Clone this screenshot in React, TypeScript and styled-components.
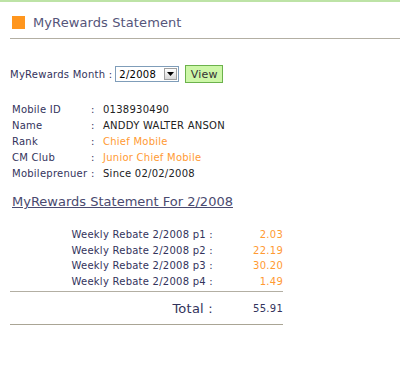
import { FC } from 'react'
import styled, { createGlobalStyle } from 'styled-components'

const GlobalStyle = createGlobalStyle`
  html, body {
    margin: 0;
    padding: 0;
    background: #ffffff;
  }
  body {
    font-family: 'DejaVu Sans', Verdana, sans-serif;
    font-size: 10px;
    letter-spacing: 0.25px;
    color: #33335c;
  }
`

const rebates = [
  { label: 'Weekly Rebate 2/2008 p1', amount: '2.03' },
  { label: 'Weekly Rebate 2/2008 p2', amount: '22.19' },
  { label: 'Weekly Rebate 2/2008 p3', amount: '30.20' },
  { label: 'Weekly Rebate 2/2008 p4', amount: '1.49' }
]

const App: FC = () => {
  return (
    <Page>
      <GlobalStyle />
      <TopBar />
      <Header>
        <Bullet />
        <Title>MyRewards Statement</Title>
      </Header>

      <Body>
        <MonthForm>
          <span>MyRewards Month :</span>
          <Select>
            <span>2/2008</span>
            <SelectArrow>
              <svg width="7" height="4" viewBox="0 0 7 4">
                <path d="M0 0h7L3.5 4z" fill="#000" />
              </svg>
            </SelectArrow>
          </Select>
          <ViewButton>View</ViewButton>
        </MonthForm>

        <InfoList>
          <InfoLabel>Mobile ID</InfoLabel>
          <Colon>:</Colon>
          <InfoValue>0138930490</InfoValue>
          <InfoLabel>Name</InfoLabel>
          <Colon>:</Colon>
          <InfoValue>ANDDY WALTER ANSON</InfoValue>
          <InfoLabel>Rank</InfoLabel>
          <Colon>:</Colon>
          <InfoValue highlight>Chief Mobile</InfoValue>
          <InfoLabel>CM Club</InfoLabel>
          <Colon>:</Colon>
          <InfoValue highlight>Junior Chief Mobile</InfoValue>
          <InfoLabel>Mobileprenuer</InfoLabel>
          <Colon>:</Colon>
          <InfoValue>Since 02/02/2008</InfoValue>
        </InfoList>

        <StatementLink>MyRewards Statement For 2/2008</StatementLink>

        <Statement>
          <RebateRows>
            {rebates.map((r) => (
              <RebateRow key={r.label}>
                <RebateLabel>{r.label} :</RebateLabel>
                <RebateAmount>{r.amount}</RebateAmount>
              </RebateRow>
            ))}
          </RebateRows>
          <TotalRow>
            <TotalLabel>Total :</TotalLabel>
            <TotalAmount>55.91</TotalAmount>
          </TotalRow>
        </Statement>
      </Body>
    </Page>
  )
}

const Page = styled.div`
  width: 400px;
  height: 386px;
  overflow: hidden;
`

const TopBar = styled.div`
  height: 2px;
  background: #bde3a6;
`

const Header = styled.div`
  display: flex;
  align-items: center;
  gap: 8px;
  margin-left: 10px;
  padding: 13px 0 8px 2px;
  border-bottom: 1px solid #b3afa3;
`

const Bullet = styled.div`
  width: 13px;
  height: 13px;
  background: #ff961e;
`

const Title = styled.div`
  font-size: 13px;
  letter-spacing: 0.1px;
  color: #55557a;
  line-height: 15px;
`

const Body = styled.div`
  padding: 26px 0 0 10px;
`

const MonthForm = styled.div`
  display: flex;
  align-items: center;
  height: 18px;
  color: #33335c;

  > span {
    margin-right: 3px;
  }
`

const Select = styled.div`
  box-sizing: border-box;
  width: 64px;
  height: 16px;
  border: 1px solid #7f9db9;
  display: flex;
  align-items: center;
  justify-content: space-between;
  padding-left: 3px;
  color: #000;
  font-size: 10px;
`

const SelectArrow = styled.div`
  box-sizing: border-box;
  width: 13px;
  height: 12px;
  margin-right: 1px;
  border: 1px solid #a0a0a0;
  background: linear-gradient(#ffffff, #d8d8d8);
  display: flex;
  align-items: center;
  justify-content: center;
`

const ViewButton = styled.div`
  box-sizing: border-box;
  margin-left: 6px;
  width: 38px;
  height: 18px;
  border: 1px solid #6cb24c;
  background: #cdf7a8;
  color: #333;
  font-size: 11px;
  display: flex;
  align-items: center;
  justify-content: center;
`

const InfoList = styled.div`
  display: grid;
  grid-template-columns: 79px 12px auto;
  grid-auto-rows: 16px;
  align-items: center;
  margin-top: 18px;
  padding-left: 2px;
`

const InfoLabel = styled.div`
  color: #33335c;
`

const Colon = styled.div`
  color: #33335c;
`

const InfoValue = styled.div<{ highlight?: boolean }>`
  color: ${({ highlight }) => (highlight ? '#ff9a33' : '#222')};
`

const StatementLink = styled.div`
  margin-top: 13px;
  padding-left: 2px;
  font-size: 13px;
  letter-spacing: 0;
  color: #4a4a70;
  text-decoration: underline;
`

const Statement = styled.div`
  width: 273px;
  margin-top: 18px;
`

const RebateRows = styled.div`
  padding-bottom: 2px;
  border-bottom: 1px solid #b3afa3;
`

const RebateRow = styled.div`
  display: flex;
  justify-content: flex-end;
  height: 15.6px;
  align-items: center;
`

const RebateLabel = styled.div`
  color: #33335c;
`

const RebateAmount = styled.div`
  width: 70px;
  text-align: right;
  color: #ff9a33;
`

const TotalRow = styled.div`
  display: flex;
  justify-content: flex-end;
  align-items: center;
  height: 32px;
  border-bottom: 1px solid #aaa595;
`

const TotalLabel = styled.div`
  font-size: 13px;
  color: #33335c;
`

const TotalAmount = styled.div`
  width: 70px;
  text-align: right;
  color: #33335c;
`

export default App
